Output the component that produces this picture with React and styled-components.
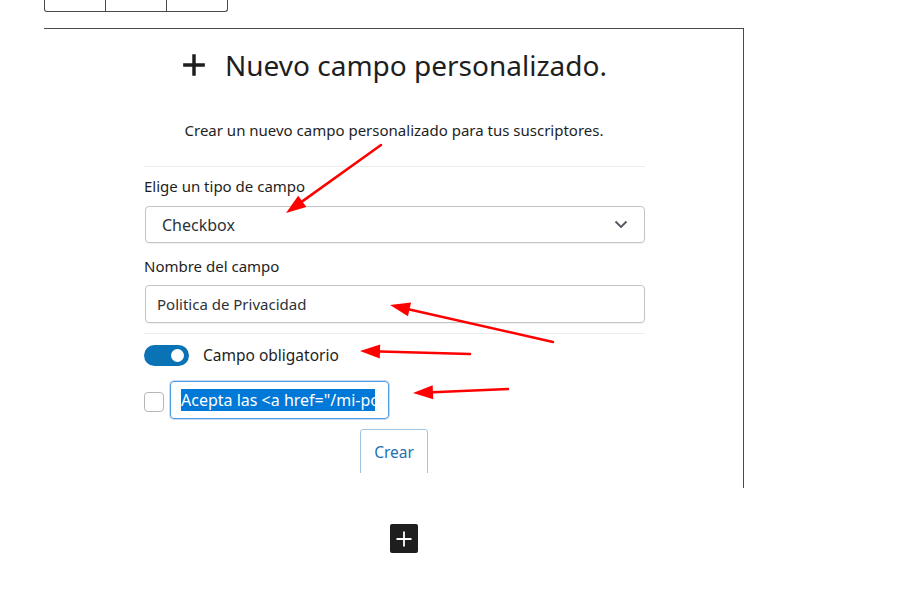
import React from "react";
import styled, { createGlobalStyle } from "styled-components";

const GlobalStyle = createGlobalStyle`
  body {
    margin: 0;
    background: #fff;
    font-family: "Noto Sans", "Open Sans", sans-serif;
    color: #1e1e1e;
  }
`;

const Page = styled.div`
  position: relative;
  width: 902px;
  height: 595px;
  overflow: hidden;
  background: #fff;
`;

const TabGroup = styled.div`
  display: flex;
  margin-left: 44px;
  width: 184px;
  height: 12px;
  border: 1px solid #4a4a4a;
  border-top: none;
  border-radius: 0 0 3px 3px;
  box-sizing: border-box;
`;

const TabCell = styled.div`
  flex: 1;
  border-right: ${(p) => (p.$last ? "none" : "1px solid #4a4a4a")};
`;

const Card = styled.div`
  margin: 16px 0 0 44px;
  width: 700px;
  height: 460px;
  border-top: 1px solid #4a4a4a;
  border-right: 1px solid #4a4a4a;
  box-sizing: border-box;
  overflow: hidden;
`;

const Inner = styled.div`
  width: 501px;
  margin-left: 100px;
`;

const Heading = styled.h2`
  display: flex;
  align-items: center;
  justify-content: center;
  gap: 18px;
  margin: 14px 0 0 -100px;
  width: 700px;
  font-size: 28px;
  font-weight: 400;
  line-height: 44px;
  color: #1e1e1e;
`;

const Lead = styled.p`
  margin: 33px 0 0 -100px;
  width: 700px;
  text-align: center;
  font-size: 15px;
  line-height: 20px;
  color: #1e1e1e;
`;

const Divider = styled.hr`
  margin: ${(p) => p.$m || "26px 0 0"};
  border: none;
  border-top: 1px solid #ececec;
`;

const Label = styled.div`
  margin-top: ${(p) => p.$mt || "10px"};
  font-size: 15px;
  line-height: 21px;
  color: #1e1e1e;
`;

const Field = styled.div`
  display: flex;
  align-items: center;
  justify-content: space-between;
  box-sizing: border-box;
  margin: ${(p) => p.$m || "9px 0 0 1px"};
  height: ${(p) => p.$h || "37px"};
  padding: 0 ${(p) => p.$pl || "16px"};
  border: 1px solid #c3c4c7;
  border-radius: 4px;
  box-shadow: 0 1px 1px rgba(0, 0, 0, 0.06);
  font-size: ${(p) => p.$fs || "16px"};
  color: #2c3338;
`;

const Row = styled.div`
  display: flex;
  align-items: center;
  gap: ${(p) => p.$gap || "14px"};
  margin-top: ${(p) => p.$mt || "10px"};
`;

const Toggle = styled.div`
  position: relative;
  width: 45px;
  height: 21px;
  border-radius: 11px;
  background: #0a73b5;
  &::after {
    content: "";
    position: absolute;
    right: 5px;
    top: 4px;
    width: 13px;
    height: 13px;
    border-radius: 50%;
    background: #fff;
  }
`;

const ToggleText = styled.span`
  font-size: 15.5px;
  color: #1e1e1e;
`;

const Check = styled.div`
  width: 18px;
  height: 18px;
  border: 1px solid #b5b7ba;
  border-radius: 4px;
  margin-top: 3px;
`;

const FocusInput = styled.div`
  display: flex;
  align-items: center;
  box-sizing: border-box;
  width: 219px;
  height: 38px;
  padding: 0 10px;
  border: 1px solid #4f9be0;
  box-shadow: 0 0 0 1px #c5dcf2;
  border-radius: 4px;
  overflow: hidden;
  white-space: nowrap;
`;

const Selected = styled.span`
  display: inline-block;
  width: 194px;
  overflow: hidden;
  background: #0078d7;
  color: #fff;
  font-size: 16px;
  line-height: 22px;
`;

const ButtonRow = styled.div`
  display: flex;
  justify-content: center;
  margin: 10px 0 0 -100px;
  width: 700px;
  height: 44px;
  overflow: hidden;
`;

const CreateButton = styled.button`
  flex: none;
  width: 68px;
  height: 60px;
  padding: 0 0 14px;
  background: #fff;
  border: 1px solid #9fc5e4;
  border-radius: 3px;
  font-family: inherit;
  font-size: 15.5px;
  color: #2271b1;
`;

const AddBlock = styled.div`
  display: flex;
  align-items: center;
  justify-content: center;
  margin: 36px 0 0 390px;
  width: 28px;
  height: 29px;
  border-radius: 2px;
  background: #1e1e1e;
`;

const Arrows = styled.svg`
  position: absolute;
  left: 0;
  top: 0;
  pointer-events: none;
`;

const Arrow = ({ x1, y1, x2, y2 }) => {
  const a = Math.atan2(y2 - y1, x2 - x1);
  const len = 20;
  const w = 7;
  const bx = x2 - len * Math.cos(a);
  const by = y2 - len * Math.sin(a);
  const px = -Math.sin(a) * w;
  const py = Math.cos(a) * w;
  return (
    <g>
      <line x1={x1} y1={y1} x2={bx} y2={by} stroke="#f00" strokeWidth="2.5" strokeLinecap="round" />
      <polygon points={`${x2},${y2} ${bx + px},${by + py} ${bx - px},${by - py}`} fill="#f00" />
    </g>
  );
};

const Plus = ({ size, stroke, color }) => (
  <svg width={size} height={size} viewBox="0 0 24 24">
    <path d="M12 2v20M2 12h20" stroke={color} strokeWidth={stroke} />
  </svg>
);

const Chevron = () => (
  <svg width="14" height="9" viewBox="0 0 14 9">
    <path d="M1.5 1.5l5.5 5.5 5.5-5.5" stroke="#50575e" strokeWidth="1.8" fill="none" />
  </svg>
);

export default function App() {
  return (
    <Page>
      <GlobalStyle />
      <TabGroup>
        <TabCell />
        <TabCell />
        <TabCell $last />
      </TabGroup>
      <Card>
        <Inner>
          <Heading>
            <Plus size={26} stroke={3.2} color="#1e1e1e" />
            Nuevo campo personalizado.
          </Heading>
          <Lead>Crear un nuevo campo personalizado para tus suscriptores.</Lead>
          <Divider />
          <Label $mt="9px">Elige un tipo de campo</Label>
          <Field>
            Checkbox
            <Chevron />
          </Field>
          <Label $mt="13px">Nombre del campo</Label>
          <Field $m="8px 0 0 1px" $h="38px" $pl="11px" $fs="15px">
            Politica de Privacidad
          </Field>
          <Divider $m="10px 0 0" />
          <Row $mt="10px">
            <Toggle />
            <ToggleText>Campo obligatorio</ToggleText>
          </Row>
          <Row $mt="15px" $gap="6px">
            <Check />
            <FocusInput>
              <Selected>Acepta las &lt;a href="/mi-politica"&gt;</Selected>
            </FocusInput>
          </Row>
          <ButtonRow>
            <CreateButton>Crear</CreateButton>
          </ButtonRow>
        </Inner>
      </Card>
      <AddBlock>
        <Plus size={18} stroke={2.4} color="#fff" />
      </AddBlock>
      <Arrows width="902" height="595">
        <Arrow x1={381} y1={145} x2={286} y2={213} />
        <Arrow x1={553} y1={342} x2={390} y2={305} />
        <Arrow x1={470} y1={354} x2={360} y2={351} />
        <Arrow x1={508} y1={389} x2={413} y2={393} />
      </Arrows>
    </Page>
  );
}
